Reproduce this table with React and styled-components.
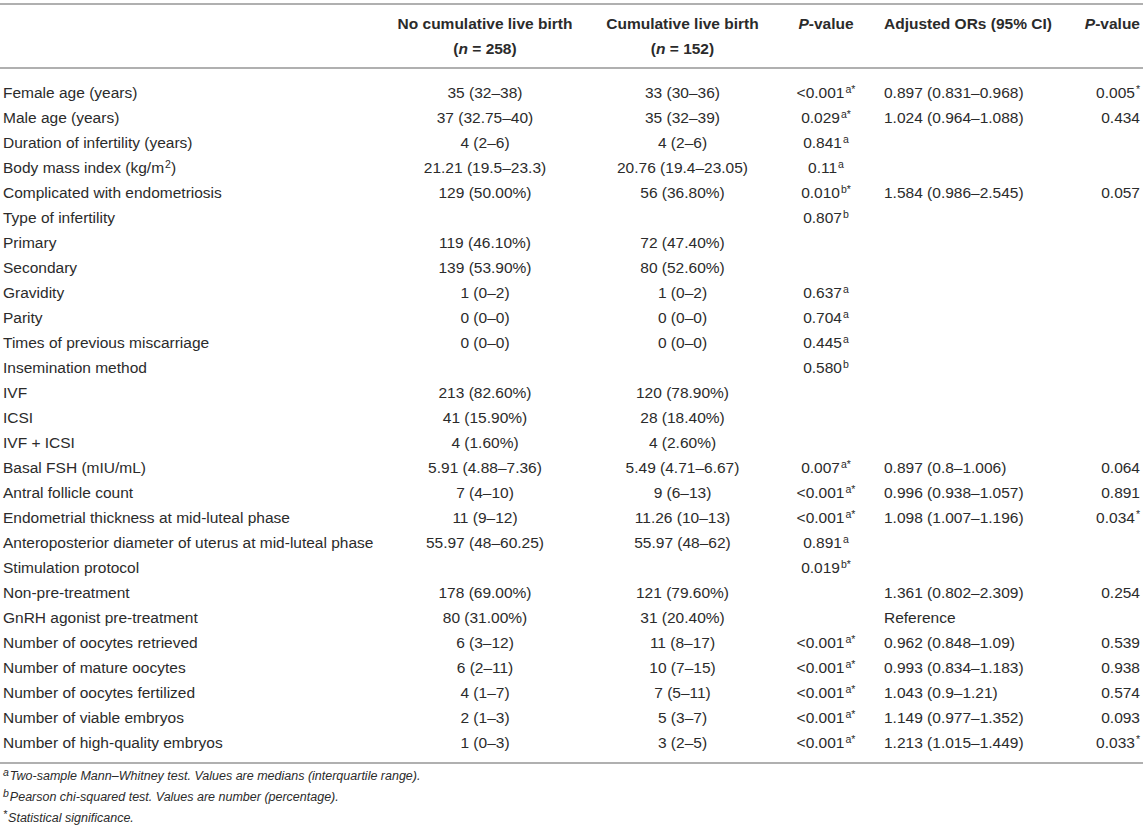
import React from 'react';
import styled, { createGlobalStyle } from 'styled-components';

const GlobalStyle = createGlobalStyle`
  body {
    margin: 0;
    background: #fff;
    font-family: "Liberation Sans", Arial, sans-serif;
    color: #2b2b2b;
  }
`;

const Wrapper = styled.div`
  width: 1143px;
  padding-top: 3px;
`;

const Table = styled.table`
  width: 1143px;
  border-collapse: collapse;
  table-layout: fixed;
  font-size: 15.5px;
`;

const HeadCell = styled.th`
  font-weight: bold;
  line-height: 25px;
  border-top: 2px solid #b0b0b0;
  border-bottom: 2px solid #b0b0b0;
  padding: 6px 0 6px ${(p) => (p.$align === 'left' ? '22px' : '0')};
  padding-right: ${(p) => (p.$align === 'right' ? '3px' : '0')};
  text-align: ${(p) => p.$align || 'center'};
  vertical-align: top;
  white-space: nowrap;
`;

const Cell = styled.td`
  height: 25px;
  line-height: 25px;
  padding: ${(p) => (p.$first ? '11px' : '0')} 0 0 0;
  padding-left: ${(p) => (p.$align === 'left' ? '22px' : p.$label ? '3px' : '0')};
  padding-right: ${(p) => (p.$align === 'right' ? '3px' : '0')};
  text-align: ${(p) => (p.$label ? 'left' : p.$align || 'center')};
  white-space: nowrap;
  vertical-align: top;
`;

const Sup = styled.sup`
  font-size: 10.5px;
  line-height: 0;
  vertical-align: 5px;
  margin-left: 1px;
`;

const NoteMark = styled.sup`
  font-size: 10.5px;
  line-height: 0;
  vertical-align: 4px;
  margin-right: 1px;
`;

const Italic = styled.i`
  font-style: italic;
`;

const Rule = styled.div`
  height: 2px;
  margin-top: 7px;
  background: #b0b0b0;
`;

const Notes = styled.div`
  padding: 2px 0 0 3px;
  font-size: 12.5px;
  font-style: italic;
  line-height: 21px;
`;

const columns = [395, 180, 215, 72, 218, 63];

const rows = [
  ['Female age (years)', '35 (32–38)', '33 (30–36)', ['<0.001', 'a*'], '0.897 (0.831–0.968)', ['0.005', '*']],
  ['Male age (years)', '37 (32.75–40)', '35 (32–39)', ['0.029', 'a*'], '1.024 (0.964–1.088)', ['0.434']],
  ['Duration of infertility (years)', '4 (2–6)', '4 (2–6)', ['0.841', 'a']],
  [<>Body mass index (kg/m<Sup>2</Sup>)</>, '21.21 (19.5–23.3)', '20.76 (19.4–23.05)', ['0.11', 'a']],
  ['Complicated with endometriosis', '129 (50.00%)', '56 (36.80%)', ['0.010', 'b*'], '1.584 (0.986–2.545)', ['0.057']],
  ['Type of infertility', '', '', ['0.807', 'b']],
  ['Primary', '119 (46.10%)', '72 (47.40%)'],
  ['Secondary', '139 (53.90%)', '80 (52.60%)'],
  ['Gravidity', '1 (0–2)', '1 (0–2)', ['0.637', 'a']],
  ['Parity', '0 (0–0)', '0 (0–0)', ['0.704', 'a']],
  ['Times of previous miscarriage', '0 (0–0)', '0 (0–0)', ['0.445', 'a']],
  ['Insemination method', '', '', ['0.580', 'b']],
  ['IVF', '213 (82.60%)', '120 (78.90%)'],
  ['ICSI', '41 (15.90%)', '28 (18.40%)'],
  ['IVF + ICSI', '4 (1.60%)', '4 (2.60%)'],
  ['Basal FSH (mIU/mL)', '5.91 (4.88–7.36)', '5.49 (4.71–6.67)', ['0.007', 'a*'], '0.897 (0.8–1.006)', ['0.064']],
  ['Antral follicle count', '7 (4–10)', '9 (6–13)', ['<0.001', 'a*'], '0.996 (0.938–1.057)', ['0.891']],
  ['Endometrial thickness at mid-luteal phase', '11 (9–12)', '11.26 (10–13)', ['<0.001', 'a*'], '1.098 (1.007–1.196)', ['0.034', '*']],
  ['Anteroposterior diameter of uterus at mid-luteal phase', '55.97 (48–60.25)', '55.97 (48–62)', ['0.891', 'a']],
  ['Stimulation protocol', '', '', ['0.019', 'b*']],
  ['Non-pre-treatment', '178 (69.00%)', '121 (79.60%)', null, '1.361 (0.802–2.309)', ['0.254']],
  ['GnRH agonist pre-treatment', '80 (31.00%)', '31 (20.40%)', null, 'Reference'],
  ['Number of oocytes retrieved', '6 (3–12)', '11 (8–17)', ['<0.001', 'a*'], '0.962 (0.848–1.09)', ['0.539']],
  ['Number of mature oocytes', '6 (2–11)', '10 (7–15)', ['<0.001', 'a*'], '0.993 (0.834–1.183)', ['0.938']],
  ['Number of oocytes fertilized', '4 (1–7)', '7 (5–11)', ['<0.001', 'a*'], '1.043 (0.9–1.21)', ['0.574']],
  ['Number of viable embryos', '2 (1–3)', '5 (3–7)', ['<0.001', 'a*'], '1.149 (0.977–1.352)', ['0.093']],
  ['Number of high-quality embryos', '1 (0–3)', '3 (2–5)', ['<0.001', 'a*'], '1.213 (1.015–1.449)', ['0.033', '*']],
];

function PValue({ value }) {
  if (!value) return null;
  const [num, mark] = value;
  return (
    <>
      {num}
      {mark && <Sup>{mark}</Sup>}
    </>
  );
}

function DataRow({ row, first }) {
  const [label, a, b, p, or, p2] = row;
  return (
    <tr>
      <Cell $first={first} $label>{label}</Cell>
      <Cell $first={first}>{a}</Cell>
      <Cell $first={first}>{b}</Cell>
      <Cell $first={first}><PValue value={p} /></Cell>
      <Cell $first={first} $align="left">{or}</Cell>
      <Cell $first={first} $align="right"><PValue value={p2} /></Cell>
    </tr>
  );
}

export default function App() {
  return (
    <>
      <GlobalStyle />
      <Wrapper>
        <Table>
          <colgroup>
            {columns.map((w, i) => (
              <col key={i} style={{ width: w }} />
            ))}
          </colgroup>
          <thead>
            <tr>
              <HeadCell />
              <HeadCell>
                No cumulative live birth
                <br />(<Italic>n</Italic> = 258)
              </HeadCell>
              <HeadCell>
                Cumulative live birth
                <br />(<Italic>n</Italic> = 152)
              </HeadCell>
              <HeadCell>
                <Italic>P</Italic>-value
              </HeadCell>
              <HeadCell $align="left">Adjusted ORs (95% CI)</HeadCell>
              <HeadCell $align="right">
                <Italic>P</Italic>-value
              </HeadCell>
            </tr>
          </thead>
          <tbody>
            {rows.map((row, i) => (
              <DataRow key={i} row={row} first={i === 0} />
            ))}
          </tbody>
        </Table>
        <Rule />
        <Notes>
          <div>
            <NoteMark>a</NoteMark>Two-sample Mann–Whitney test. Values are medians (interquartile range).
          </div>
          <div>
            <NoteMark>b</NoteMark>Pearson chi-squared test. Values are number (percentage).
          </div>
          <div>
            <NoteMark>*</NoteMark>Statistical significance.
          </div>
        </Notes>
      </Wrapper>
    </>
  );
}
